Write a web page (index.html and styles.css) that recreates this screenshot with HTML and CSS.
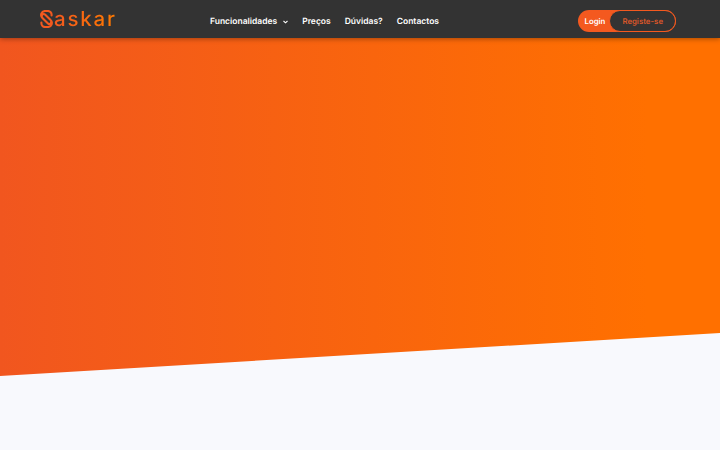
FILE: index.html
```html
<!DOCTYPE html>
<html lang="pt">
<head>
  <meta charset="UTF-8" />
  <title>Saskar</title>
  <link rel="stylesheet" href="styles.css">
</head>
<body>
  <header class="header">
    <a href="#" class="logo" aria-label="Saskar">
      <svg class="logo-mark" width="13" height="18" viewBox="0 0 13 18" fill="none">
        <path d="M11.6 5.4V4.8A3.8 3.8 0 0 0 7.8 1H5.2A4 4 0 0 0 2.4 7.9L8 13.4A1.9 1.9 0 0 0 11.2 11.9 1.9 1.9 0 0 0 10.6 10.1L5 4.6A1.9 1.9 0 0 0 1.8 6.1 1.9 1.9 0 0 0 2.4 7.9M10.6 10.1A4 4 0 0 1 7.8 17H5.2A3.8 3.8 0 0 1 1.4 13.2V12.6" stroke="#f2591f" stroke-width="2.1" stroke-linecap="round"/>
      </svg>
      <span class="logo-text">askar</span>
    </a>
    <nav class="nav">
      <a href="#" class="nav-link">Funcionalidades
        <svg class="caret" width="5" height="4" viewBox="0 0 6 4" fill="none"><path d="M.6.8 3 3 5.4.8" stroke="#fff" stroke-width="1.3"/></svg>
      </a>
      <a href="#" class="nav-link">Preços</a>
      <a href="#" class="nav-link">Dúvidas?</a>
      <a href="#" class="nav-link">Contactos</a>
    </nav>
    <div class="auth">
      <a href="#" class="login">Login</a>
      <a href="#" class="register">Registe-se</a>
    </div>
  </header>
  <section class="hero"></section>
</body>
</html>
```

FILE: styles.css
```css
html, body {
  height: 100%;
}

body {
  margin: 0;
  overflow: hidden;
  background: #f8f9fd;
  font-family: Inter, "Open Sans", sans-serif;
  text-rendering: geometricPrecision;
}

a {
  text-decoration: none;
}

.header {
  position: relative;
  z-index: 10;
  display: flex;
  align-items: center;
  height: 38px;
  padding: 0 44px 0 40px;
  background: #333333;
  box-shadow: 0 1px 5px rgba(0, 0, 0, 0.35);
}

.logo {
  display: flex;
  align-items: center;
  gap: 1px;
  width: 170px;
  margin-top: -1px;
}

.logo-text {
  font-size: 20.5px;
  font-weight: 500;
  letter-spacing: 1.8px;
  line-height: 18px;
  background: linear-gradient(90deg, #f2591f, #ff7a00);
  -webkit-background-clip: text;
  background-clip: text;
  color: transparent;
}

.nav {
  display: flex;
  align-items: center;
  gap: 14px;
  margin-top: 6px;
}

.nav-link {
  display: flex;
  align-items: center;
  gap: 6px;
  color: #ffffff;
  font-size: 8.5px;
  font-weight: 600;
}

.auth {
  display: flex;
  margin-left: auto;
  margin-top: 3px;
  height: 22px;
  border-radius: 11px;
  background: #f4591f;
  font-size: 7.8px;
  font-weight: 600;
}

.login {
  display: flex;
  align-items: center;
  padding: 0 4px 0 7px;
  color: #ffffff;
}

.register {
  display: flex;
  align-items: center;
  padding: 0 12px;
  border: 1.5px solid #f4591f;
  border-radius: 11px;
  background: #333333;
  color: #d8562a;
}

.hero {
  height: 338px;
  background: linear-gradient(90deg, #f1561f 0%, #ff7000 90%);
  clip-path: polygon(0 0, 100% 0, 100% 295px, 0 100%);
}
```
